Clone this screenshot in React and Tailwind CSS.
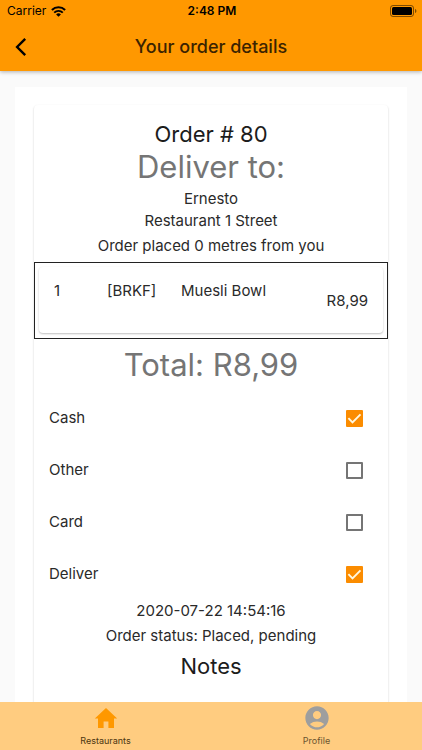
import { useState } from "react";
import { MdAccountCircle } from "react-icons/md";

const items = [{ qty: 1, code: "[BRKF]", name: "Muesli Bowl", price: "R8,99" }];

function StatusBar() {
  return (
    <div className="grid h-[22px] grid-cols-3 items-center pl-[7px] pr-[5px] text-[12px] text-black">
      <div className="flex items-center gap-[5px]">
        <span>Carrier</span>
        <svg width="15" height="11" viewBox="0 0 15 11" fill="none" stroke="black">
          <path d="M0.9 4a9.4 9.4 0 0 1 13.2 0" strokeWidth="2.1" />
          <path d="M3.2 6.6a6.1 6.1 0 0 1 8.6 0" strokeWidth="1.9" />
          <path d="M7.5 10.8 5.1 8.4a3.4 3.4 0 0 1 4.8 0z" fill="black" stroke="none" />
        </svg>
      </div>
      <span className="text-center font-semibold">2:48 PM</span>
      <svg className="justify-self-end" width="27" height="12" viewBox="0 0 27 12">
        <rect x="0.5" y="0.5" width="23" height="11" rx="2.5" fill="none" stroke="black" strokeOpacity="0.5" />
        <rect x="2" y="2" width="20" height="8" rx="1.5" fill="black" />
        <path d="M25 4v4c0.9-0.3 1.4-1.1 1.4-2s-0.5-1.7-1.4-2z" fill="black" fillOpacity="0.5" />
      </svg>
    </div>
  );
}

function Option({ id, label, checked, onChange }) {
  return (
    <div className="flex h-[52px] items-center justify-between pl-[15px] pr-[25px]">
      <label htmlFor={id}>{label}</label>
      <span className="relative flex">
        <input
          type="checkbox"
          id={id}
          checked={checked}
          onChange={onChange}
          className="size-[17px] appearance-none rounded-[1px] border-2 border-[#757575] checked:border-[#fb8c00] checked:bg-[#fb8c00]"
        />
        {checked && (
          <svg
            className="pointer-events-none absolute inset-0"
            width="17"
            height="17"
            viewBox="0 0 17 17"
            fill="none"
            stroke="#fff8e1"
            strokeWidth="1.9"
          >
            <path d="M2.4 8.2l4.1 4.1 8-8" />
          </svg>
        )}
      </span>
    </div>
  );
}

function App() {
  const [options, setOptions] = useState({
    Cash: true,
    Other: false,
    Card: false,
    Deliver: true,
  });

  const toggle = (name) => {
    setOptions((prev) => ({ ...prev, [name]: !prev[name] }));
  };

  return (
    <div className="flex h-screen flex-col bg-[#fafafa] font-['Inter',sans-serif] text-[15px] text-[#2a2a2a]">
      <header className="relative z-10 bg-[#ff9800] shadow-[0_1px_4px_rgba(0,0,0,0.3)]">
        <StatusBar />
        <div className="grid h-[49px] grid-cols-[48px_1fr_48px] items-center">
          <button type="button" aria-label="Back" className="flex pl-[15px] text-black">
            <svg width="12" height="18" viewBox="0 0 12 18" fill="none" stroke="currentColor" strokeWidth="2.4">
              <path d="M10.2 0.9 2.1 9l8.1 8.1" />
            </svg>
          </button>
          <h1 className="text-center text-[18px] font-medium text-[#3b2300]">
            Your order details
          </h1>
        </div>
      </header>

      <main className="flex-1 overflow-hidden px-[15px] pt-4">
        <div className="min-h-full bg-white px-[19px] pt-[18px]">
          <section className="min-h-[640px] rounded-[4px] pt-[13px] text-center shadow-[0_1px_2px_rgba(0,0,0,0.22)]">
            <h2 className="text-[22px] leading-8 text-[#1c1c1c]">Order # 80</h2>
            <p className="text-[31px] leading-[34px] text-[#757575]">Deliver to:</p>
            <p className="mt-1 leading-[22px]">Ernesto</p>
            <p className="leading-[22px]">Restaurant 1 Street</p>
            <p className="leading-7">Order placed 0 metres from you</p>

            <ul className="mt-0.5 border border-[#222222] px-1 pt-1 pb-[5px]">
              {items.map((item) => (
                <li
                  key={item.code}
                  className="grid h-[66px] grid-cols-[53px_74px_1fr_auto] rounded-[4px] px-[15px] pt-[14px] text-left leading-5 shadow-[0_1px_2px_rgba(0,0,0,0.25)]"
                >
                  <span>{item.qty}</span>
                  <span>{item.code}</span>
                  <span>{item.name}</span>
                  <span className="pt-[10px]">{item.price}</span>
                </li>
              ))}
            </ul>

            <p className="pt-[9px] pb-[10px] text-[31px] leading-[34px] text-[#757575]">
              Total: R8,99
            </p>

            <form className="text-left">
              {Object.keys(options).map((name) => (
                <Option
                  key={name}
                  id={name}
                  label={name}
                  checked={options[name]}
                  onChange={() => toggle(name)}
                />
              ))}
            </form>

            <p className="leading-[22px]">2020-07-22 14:54:16</p>
            <p className="leading-7">Order status: Placed, pending</p>
            <h3 className="text-[22px] leading-8 text-[#1c1c1c]">Notes</h3>
          </section>
        </div>
      </main>

      <nav className="relative z-10 grid h-12 grid-cols-2 bg-[#ffcc80] text-[9px] leading-3">
        <a href="#restaurants" className="flex flex-col items-center gap-[3px] pt-0.5 text-[#4a3510]">
          <svg width="28" height="28" viewBox="0 0 28 28" fill="#ff9800">
            <path d="M14 4 2.8 14.4H6V24h5.6v-6.6h4.8V24H22v-9.6h3.2z" />
          </svg>
          Restaurants
        </a>
        <a href="#profile" className="flex flex-col items-center gap-[3px] pt-0.5 text-[#6b5430]">
          <MdAccountCircle size={28} className="text-[#9e9e9e]" />
          Profile
        </a>
      </nav>
    </div>
  );
}
export default App;
